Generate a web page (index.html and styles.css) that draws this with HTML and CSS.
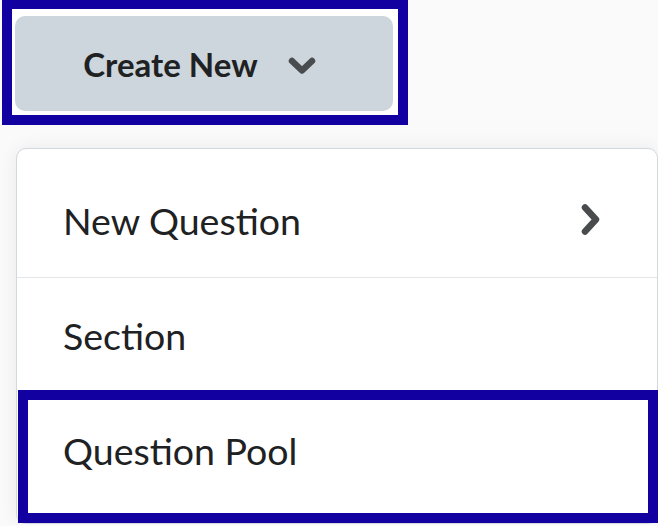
FILE: index.html
```html
<!DOCTYPE html>
<html lang="en">
<head>
  <meta charset="UTF-8" />
  <title>Create New</title>
  <meta name="viewport" content="width=device-width, initial-scale=1" />
  <link rel="stylesheet" href="styles.css">
</head>
<body>
  <div class="focus-box">
    <button class="create-btn" type="button" aria-haspopup="true">
      <span>Create New</span>
      <svg class="chev-down" width="30" height="20" viewBox="0 0 30 20" aria-hidden="true">
        <path d="M5 5 L15 14.5 L25 5" />
      </svg>
    </button>
  </div>

  <ul class="menu" role="menu">
    <li class="menu-item has-sub" role="menuitem">
      <span>New Question</span>
      <svg class="chev-right" width="22" height="34" viewBox="0 0 22 34" aria-hidden="true">
        <path d="M5 4.5 L16 16.5 L5 28.5" />
      </svg>
    </li>
    <li class="menu-item" role="menuitem"><span>Section</span></li>
    <li class="menu-item is-marked" role="menuitem"><span>Question Pool</span></li>
  </ul>
</body>
</html>
```

FILE: styles.css
```css
:root {
  --mark-blue: #1300a0;
  --btn-bg: #cdd5dd;
  --text-dark: #202122;
  --icon-gray: #494c4e;
  --line: #d3d8dc;
  --divider: #e3e6e9;
}
*, *::before, *::after {
  box-sizing: border-box;
}
body {
  margin: 0;
  background: #fafafa;
  font-family: Lato, "Open Sans", sans-serif;
  color: var(--text-dark);
  overflow: hidden;
}

.focus-box {
  display: inline-block;
  margin: -1px 0 0 2px;
  padding: 7px 5px 4px 3px;
  border: 10px solid var(--mark-blue);
  background: #fff;
}
.create-btn {
  display: flex;
  align-items: center;
  justify-content: center;
  gap: 29px;
  width: 378px;
  height: 95px;
  padding: 0 8px 0 0;
  border: none;
  border-radius: 10px;
  background: var(--btn-bg);
  font-family: inherit;
  font-size: 33px;
  font-weight: 700;
  color: var(--text-dark);
}
.chev-down path,
.chev-right path {
  fill: none;
  stroke: var(--icon-gray);
  stroke-width: 6.5;
  stroke-linecap: round;
  stroke-linejoin: round;
}
.chev-down {
  margin-top: 4px;
}

.menu {
  list-style: none;
  margin: 23px 0 0 16px;
  padding: 14px 0 15px;
  width: 642px;
  background: #fff;
  border: 1px solid var(--line);
  border-radius: 10px;
  box-shadow: 0 0 18px rgba(0, 0, 0, 0.07);
}
.menu-item {
  position: relative;
  display: flex;
  align-items: center;
  justify-content: space-between;
  height: 115px;
  padding: 0 55px 0 46px;
  font-size: 37.5px;
}
.has-sub {
  border-bottom: 1px solid var(--divider);
}
.is-marked::after {
  content: '';
  position: absolute;
  top: -3px;
  left: 1px;
  right: -1px;
  bottom: -15px;
  border: 10px solid var(--mark-blue);
}
```
